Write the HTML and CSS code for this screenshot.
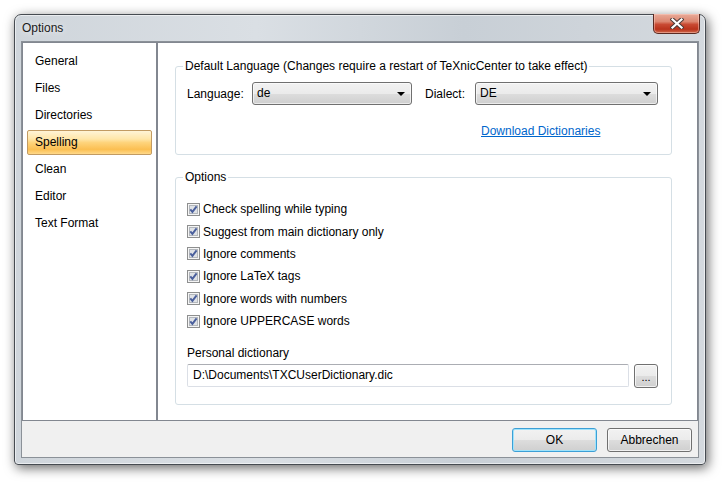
FILE: index.html
```html
<!DOCTYPE html>
<html>
<head>
<meta charset="utf-8">
<title>Options</title>
<link rel="stylesheet" href="styles.css">
</head>
<body>
<div class="window">
  <div class="titlebar">Options</div>
  <div class="close-btn">
    <svg width="14" height="11" viewBox="0 0 14 11">
      <path d="M2.5 1.5 L11.5 9.5 M11.5 1.5 L2.5 9.5" stroke="#4a3a38" stroke-width="4.2" stroke-linecap="square" fill="none"/>
      <path d="M2.5 1.5 L11.5 9.5 M11.5 1.5 L2.5 9.5" stroke="#ffffff" stroke-width="2.2" stroke-linecap="square" fill="none"/>
    </svg>
  </div>
  <div class="client">
    <div class="panels">
      <ul class="nav">
        <li class="nav-item">General</li>
        <li class="nav-item">Files</li>
        <li class="nav-item">Directories</li>
        <li class="nav-item selected">Spelling</li>
        <li class="nav-item">Clean</li>
        <li class="nav-item">Editor</li>
        <li class="nav-item">Text Format</li>
      </ul>
      <div class="content">
        <fieldset class="group group-lang">
          <legend>Default Language (Changes require a restart of TeXnicCenter to take effect)</legend>
          <div class="lang-row">
            <span class="label label-lang">Language:</span>
            <div class="combo combo-lang"><span class="combo-text">de</span><span class="arrow"></span></div>
            <span class="label label-dialect">Dialect:</span>
            <div class="combo combo-dialect"><span class="combo-text">DE</span><span class="arrow"></span></div>
          </div>
          <div class="link-row"><a class="link" href="#">Download Dictionaries</a></div>
        </fieldset>
        <fieldset class="group group-opts">
          <legend>Options</legend>
          <ul class="checks">
            <li class="check-row"><svg class="cb" width="13" height="13" viewBox="0 0 13 13"><rect x="0.5" y="0.5" width="12" height="12" fill="#f5f5f5" stroke="#8e8f8f"/><rect x="2.5" y="2.5" width="8" height="8" fill="#dfe2e6" stroke="#b3b7bc"/><path d="M3.3 6.4 L5.4 8.9 L9.6 3.4" stroke="#4a5f9c" stroke-width="1.9" fill="none"/></svg><span>Check spelling while typing</span></li>
            <li class="check-row"><svg class="cb" width="13" height="13" viewBox="0 0 13 13"><rect x="0.5" y="0.5" width="12" height="12" fill="#f5f5f5" stroke="#8e8f8f"/><rect x="2.5" y="2.5" width="8" height="8" fill="#dfe2e6" stroke="#b3b7bc"/><path d="M3.3 6.4 L5.4 8.9 L9.6 3.4" stroke="#4a5f9c" stroke-width="1.9" fill="none"/></svg><span>Suggest from main dictionary only</span></li>
            <li class="check-row"><svg class="cb" width="13" height="13" viewBox="0 0 13 13"><rect x="0.5" y="0.5" width="12" height="12" fill="#f5f5f5" stroke="#8e8f8f"/><rect x="2.5" y="2.5" width="8" height="8" fill="#dfe2e6" stroke="#b3b7bc"/><path d="M3.3 6.4 L5.4 8.9 L9.6 3.4" stroke="#4a5f9c" stroke-width="1.9" fill="none"/></svg><span>Ignore comments</span></li>
            <li class="check-row"><svg class="cb" width="13" height="13" viewBox="0 0 13 13"><rect x="0.5" y="0.5" width="12" height="12" fill="#f5f5f5" stroke="#8e8f8f"/><rect x="2.5" y="2.5" width="8" height="8" fill="#dfe2e6" stroke="#b3b7bc"/><path d="M3.3 6.4 L5.4 8.9 L9.6 3.4" stroke="#4a5f9c" stroke-width="1.9" fill="none"/></svg><span>Ignore LaTeX tags</span></li>
            <li class="check-row"><svg class="cb" width="13" height="13" viewBox="0 0 13 13"><rect x="0.5" y="0.5" width="12" height="12" fill="#f5f5f5" stroke="#8e8f8f"/><rect x="2.5" y="2.5" width="8" height="8" fill="#dfe2e6" stroke="#b3b7bc"/><path d="M3.3 6.4 L5.4 8.9 L9.6 3.4" stroke="#4a5f9c" stroke-width="1.9" fill="none"/></svg><span>Ignore words with numbers</span></li>
            <li class="check-row"><svg class="cb" width="13" height="13" viewBox="0 0 13 13"><rect x="0.5" y="0.5" width="12" height="12" fill="#f5f5f5" stroke="#8e8f8f"/><rect x="2.5" y="2.5" width="8" height="8" fill="#dfe2e6" stroke="#b3b7bc"/><path d="M3.3 6.4 L5.4 8.9 L9.6 3.4" stroke="#4a5f9c" stroke-width="1.9" fill="none"/></svg><span>Ignore UPPERCASE words</span></li>
          </ul>
          <div class="dict-label">Personal dictionary</div>
          <div class="dict-row">
            <div class="textbox">D:\Documents\TXCUserDictionary.dic</div>
            <div class="btn btn-browse">...</div>
          </div>
        </fieldset>
      </div>
    </div>
    <div class="buttonbar">
      <div class="btn btn-dlg btn-default">OK</div>
      <div class="btn btn-dlg">Abbrechen</div>
    </div>
  </div>
</div>
</body>
</html>
```
FILE: styles.css
```css
* { box-sizing: border-box; }

body {
  margin: 0;
  width: 724px;
  height: 484px;
  overflow: hidden;
  background: #ffffff;
  font-family: "Liberation Sans", Arial, sans-serif;
  font-size: 12px;
  color: #000;
}

.window {
  position: relative;
  margin: 14px 0 0 14px;
  width: 692px;
  height: 451px;
  border: 1px solid #464b51;
  border-radius: 7px 7px 4px 4px;
  background: linear-gradient(to right, #cfd5db 0%, #dadfe4 35%, #c8cfd6 65%, #d4d9de 100%);
  box-shadow: inset 0 0 0 1px rgba(255,255,255,0.55), 2px 3px 12px rgba(0,0,0,0.6);
  padding: 0 6px 6px 6px;
  display: flex;
  flex-direction: column;
}

.titlebar {
  height: 26px;
  line-height: 26px;
  padding-left: 1px;
  color: #1a1a1a;
  text-shadow: 0 0 6px rgba(255,255,255,0.9);
}

.close-btn {
  position: absolute;
  top: -1px;
  right: 5px;
  width: 47px;
  height: 20px;
  border: 1px solid #5a2a22;
  border-top: none;
  border-radius: 0 0 5px 5px;
  background: linear-gradient(#e9ab99 0%, #dc8670 40%, #c94a33 55%, #b9331c 80%, #d06a4c 100%);
  box-shadow: inset 0 0 0 1px rgba(255,210,200,0.45);
  display: flex;
  align-items: center;
  justify-content: center;
}

.client {
  flex: 1;
  border: 1px solid #8b9198;
  background: #f0f0f0;
  display: flex;
  flex-direction: column;
}

.panels {
  height: 379px;
  display: flex;
}

.nav {
  list-style: none;
  margin: 0;
  width: 135px;
  border: 1px solid #828790;
  background: #fff;
  padding: 6px 0 0 0;
}

.nav-item {
  height: 25px;
  line-height: 23px;
  margin: 0 4px 2px 4px;
  padding-left: 7px;
  border: 1px solid transparent;
  border-radius: 2px;
}

.nav-item.selected {
  border-color: #c29b62;
  background: linear-gradient(#fff4d6 0%, #ffe6a8 35%, #fed47c 50%, #fbbf52 80%, #ffd98a 100%);
}

.content {
  width: 541px;
  border: 1px solid #828790;
  background: #fff;
  padding: 0 25px 0 17px;
}

.group {
  margin: 0;
  border: 1px solid #d5dfe5;
  border-radius: 3px;
  padding: 0 13px 0 11px;
  min-width: 0;
}

.group legend {
  padding: 0 2px;
  margin-left: -4px;
  line-height: 14px;
  color: #000;
}

.group-lang {
  margin-top: 16px;
  padding-top: 9px;
  padding-bottom: 16px;
}

.lang-row {
  display: flex;
  align-items: center;
  height: 23px;
}

.label-lang { width: 65px; }
.label-dialect { width: 50px; margin-left: 13px; }

.combo {
  position: relative;
  height: 23px;
  border: 1px solid #707070;
  border-radius: 3px;
  background: linear-gradient(#f2f2f2 0%, #ebebeb 50%, #dddddd 51%, #cfcfcf 100%);
  box-shadow: inset 0 0 0 1px rgba(255,255,255,0.6);
  padding-left: 4px;
  line-height: 21px;
  display: flex;
  align-items: center;
  justify-content: space-between;
  padding-right: 6px;
}

.combo-lang { width: 160px; }
.combo-dialect { width: 183px; }

.arrow {
  width: 0;
  height: 0;
  border-left: 4px solid transparent;
  border-right: 4px solid transparent;
  border-top: 4px solid #000;
}

.link-row {
  margin-top: 19px;
  padding-left: 294px;
  line-height: 14px;
}

.link {
  color: #0066cc;
  text-decoration: underline;
}

.group-opts {
  margin-top: 15px;
  padding-top: 14px;
  padding-bottom: 16px;
}

.checks {
  list-style: none;
  margin: 0;
  padding: 0;
}

.check-row {
  height: 22.4px;
  display: flex;
  align-items: center;
}

.cb {
  flex: none;
  margin-right: 3px;
}

.dict-label {
  margin-top: 13.6px;
  line-height: 14px;
}

.dict-row {
  margin-top: 4px;
  display: flex;
  align-items: center;
}

.textbox {
  width: 444px;
  height: 23px;
  border: 1px solid #dbdfe6;
  border-top-color: #abadb3;
  border-radius: 2px;
  padding-left: 5px;
  line-height: 21px;
  background: #fff;
}

.btn {
  border: 1px solid #707070;
  border-radius: 3px;
  background: linear-gradient(#f2f2f2 0%, #ebebeb 50%, #dddddd 51%, #cfcfcf 100%);
  box-shadow: inset 0 0 0 1px rgba(255,255,255,0.7);
  text-align: center;
}

.btn-browse {
  width: 24px;
  height: 24px;
  margin-left: 5px;
  line-height: 24px;
  font-size: 11px;
}

.buttonbar {
  flex: 1;
  display: flex;
  justify-content: flex-end;
  gap: 10px;
  padding: 7px 6px 0 0;
}

.btn-dlg {
  width: 85px;
  height: 24px;
  line-height: 22px;
}

.btn-default {
  border-color: #3c9fd6;
  box-shadow: inset 0 0 0 1px #9fe3fb;
}
```
